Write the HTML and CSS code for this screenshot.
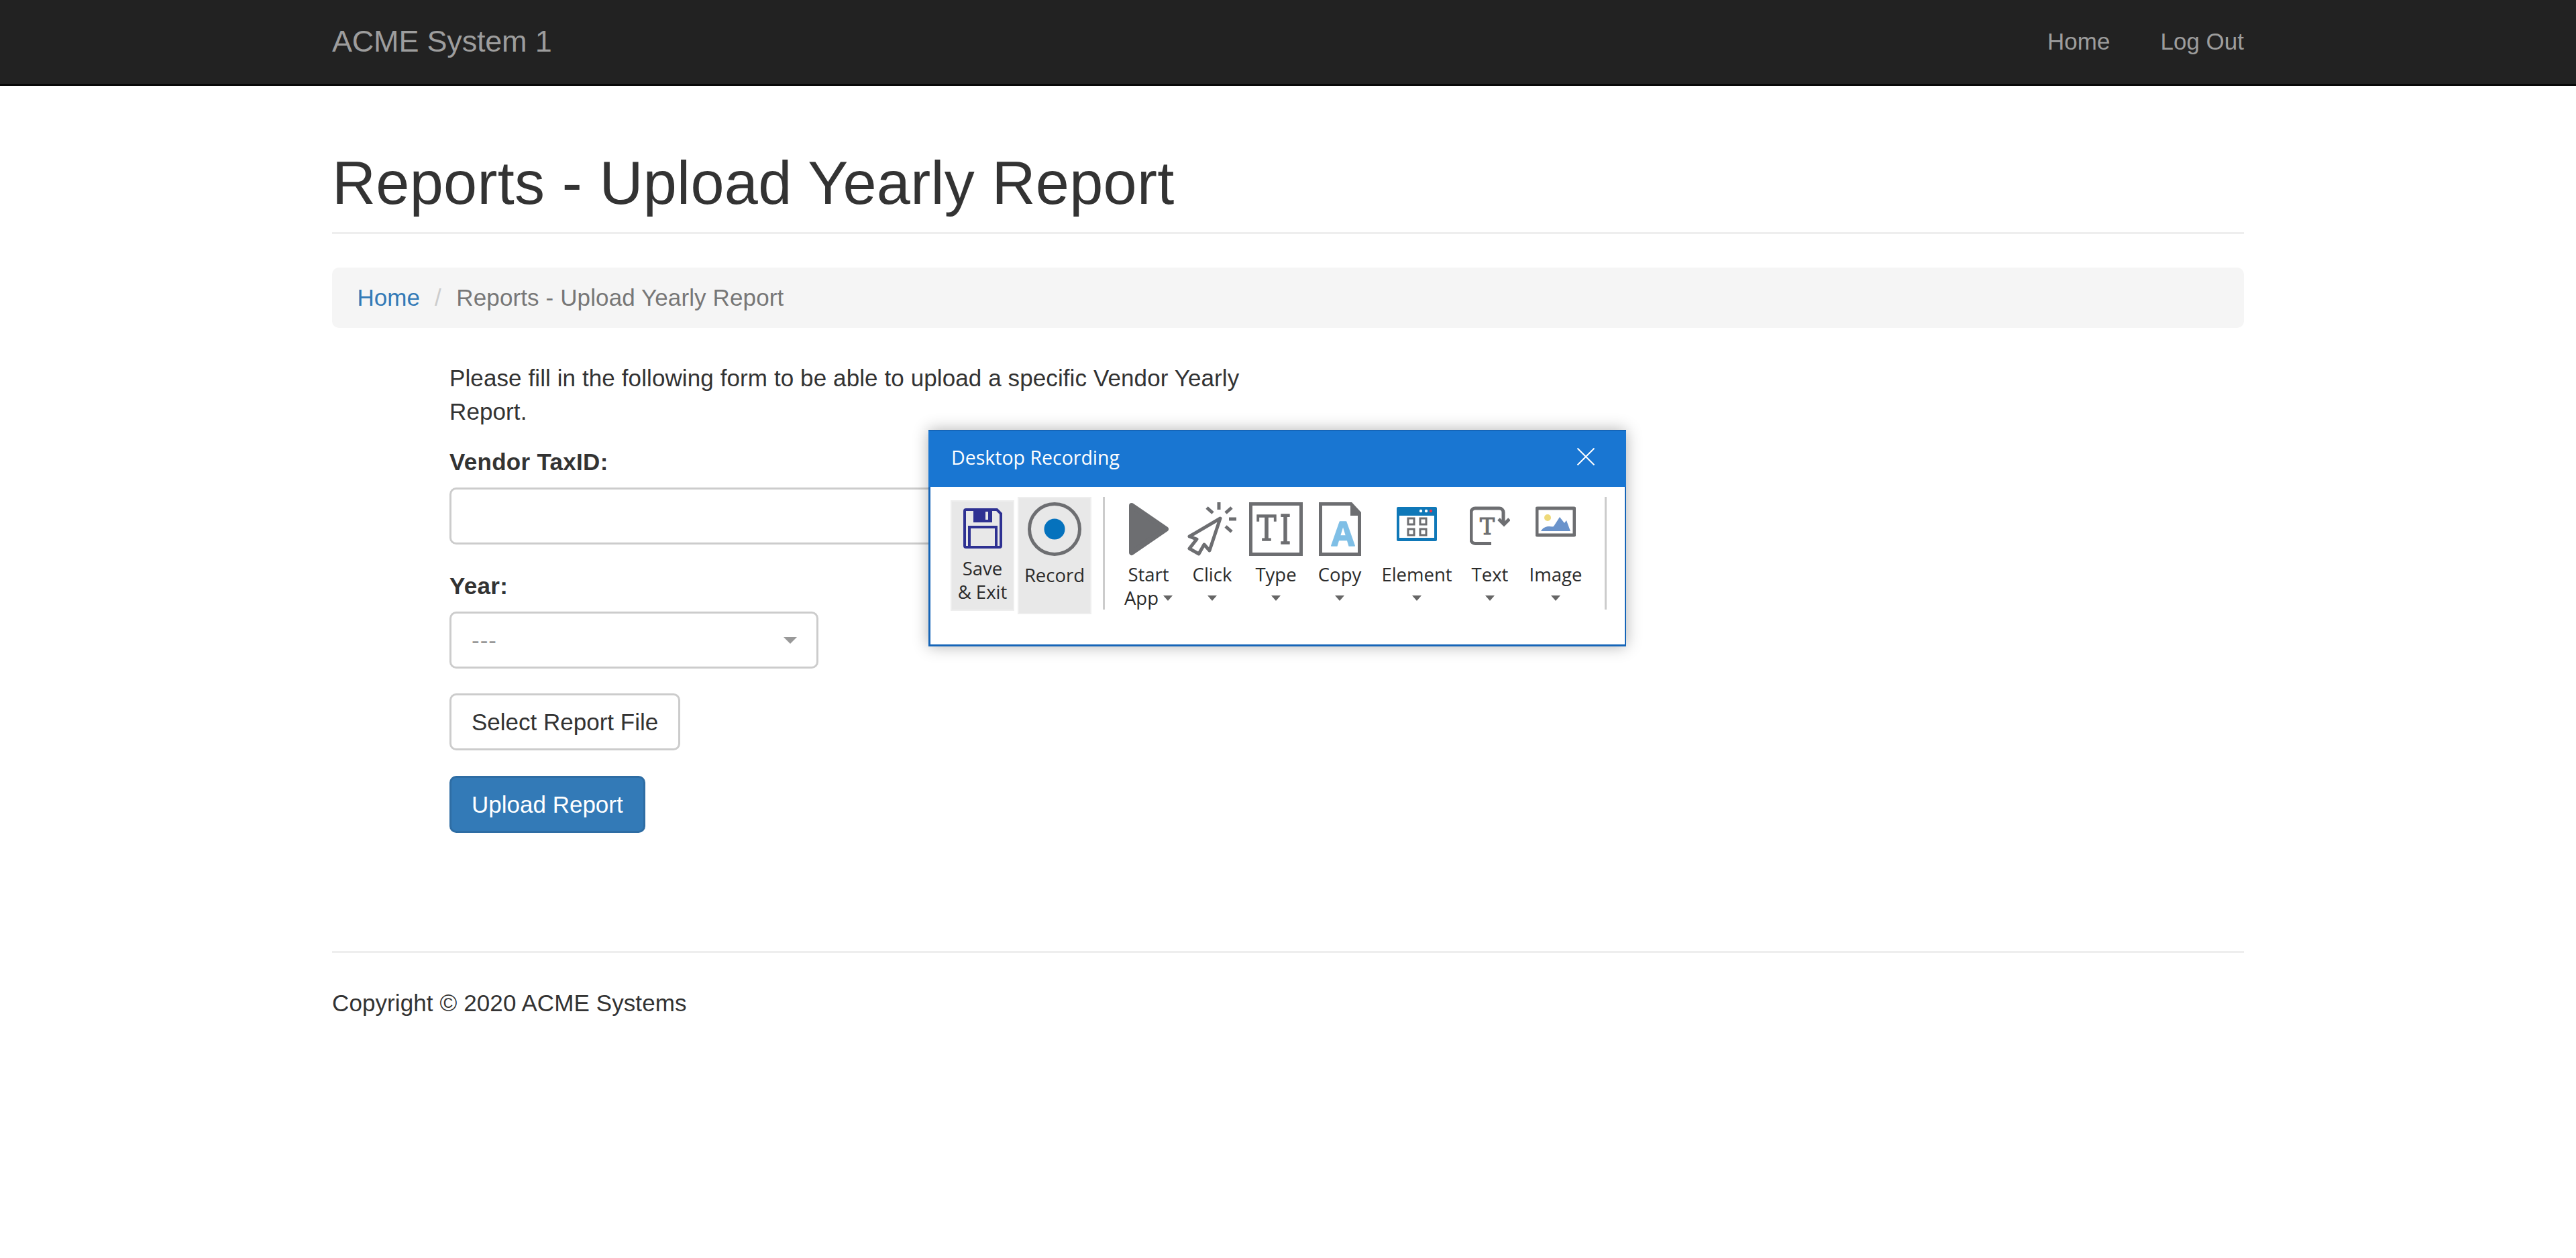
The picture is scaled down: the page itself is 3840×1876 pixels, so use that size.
FILE: index.html
```html
<!DOCTYPE html>
<html lang="en">
<head>
<meta charset="UTF-8">
<meta name="viewport" content="width=device-width, initial-scale=1.0">
<title>Reports - Upload Yearly Report</title>
<link rel="stylesheet" href="styles.css">
</head>
<body>

<nav class="navbar">
    <div class="container navbar-inner">
        <a class="brand" href="#">ACME System 1</a>
        <ul class="nav-links">
            <li><a href="#">Home</a></li>
            <li><a href="#">Log Out</a></li>
        </ul>
    </div>
</nav>

<main class="container">
    <div class="page-header">
        <h1>Reports - Upload Yearly Report</h1>
    </div>

    <ol class="breadcrumb">
        <li><a href="#">Home</a></li>
        <li class="active">Reports - Upload Yearly Report</li>
    </ol>

    <form class="report-form">
        <p>Please fill in the following form to be able to upload a specific Vendor Yearly Report.</p>

        <div class="form-group">
            <label for="taxid">Vendor TaxID:</label>
            <input id="taxid" class="form-control" type="text">
        </div>

        <div class="form-group">
            <label for="year">Year:</label>
            <div class="select-wrap">
                <select id="year" class="form-control year-select">
                    <option>---</option>
                </select>
            </div>
        </div>

        <div class="form-group">
            <button type="button" class="btn btn-default">Select Report File</button>
        </div>

        <div class="form-group">
            <button type="button" class="btn btn-primary">Upload Report</button>
        </div>
    </form>

    <footer class="site-footer">
        <p>Copyright &copy; 2020 ACME Systems</p>
    </footer>
</main>

<!-- recorder window floats over the page -->
<div class="recorder">
    <div class="recorder-title">
        <span>Desktop Recording</span>
        <svg class="recorder-close" viewBox="0 0 26 26"><path d="M0.5 0.5L25.5 25.5M25.5 0.5L0.5 25.5"/></svg>
    </div>
    <div class="toolbar">
        <div class="tool-save">
            <svg class="icon" width="58" height="60" viewBox="0 0 58 60">
                <path class="floppy" d="M4 2H50L56 8V56a2 2 0 0 1-2 2H4a2 2 0 0 1-2-2V4a2 2 0 0 1 2-2Z"/>
                <path class="floppy-fill" d="M15 2H43V21H15Z"/>
                <rect class="floppy-slot" x="33" y="5" width="4" height="12"/>
                <path class="floppy" d="M9 58V28H49V58"/>
            </svg>
            <span class="tool-label">Save</span>
            <span class="tool-label">&amp; Exit</span>
        </div>

        <div class="tool-record">
            <svg class="icon" width="80" height="80" viewBox="0 0 80 80">
                <circle class="stroke-grey" cx="40" cy="40" r="37.5"/>
                <circle class="record-dot" cx="40" cy="40" r="15.5"/>
            </svg>
            <span class="tool-label">Record</span>
        </div>

        <div class="tool-sep"></div>

        <div class="tool tool-start">
            <svg class="icon" width="59" height="80" viewBox="0 0 59 80">
                <path class="play" d="M4 5L55 40L4 75Z"/>
            </svg>
            <span class="tool-label">Start</span>
            <span class="tool-label tool-label-row">App<i class="caret"></i></span>
        </div>

        <div class="tool tool-click">
            <svg class="icon" width="74" height="80" viewBox="0 0 74 80">
                <path class="stroke-grey cursor" d="M49 24L3 51L14 55L3 69L17 77L25 63L33 72Z"/>
                <path class="stroke-grey" d="M47 0V11M57 16L66 8M62 25H73M57 36L66 44M38 16L29 8"/>
            </svg>
            <span class="tool-label">Click</span>
            <span class="tool-label tool-label-row"><i class="caret"></i></span>
        </div>

        <div class="tool tool-type">
            <svg class="icon" width="80" height="80" viewBox="0 0 80 80">
                <rect class="stroke-grey" x="2.5" y="2.5" width="75" height="75"/>
                <text class="icon-glyph" x="26" y="57" text-anchor="middle" textLength="29" lengthAdjust="spacingAndGlyphs">T</text>
                <text class="icon-glyph icon-glyph-tall" x="54" y="62" text-anchor="middle" textLength="17" lengthAdjust="spacingAndGlyphs">I</text>
            </svg>
            <span class="tool-label">Type</span>
            <span class="tool-label tool-label-row"><i class="caret"></i></span>
        </div>

        <div class="tool tool-copy">
            <svg class="icon" width="63" height="80" viewBox="0 0 63 80">
                <path class="stroke-grey" d="M2.5 2.5H48L60.5 16V77.5H2.5Z"/>
                <path class="fill-grey" d="M47 0L63 16V20H47Z"/>
                <text class="icon-letter" x="36" y="65" text-anchor="middle">A</text>
            </svg>
            <span class="tool-label">Copy</span>
            <span class="tool-label tool-label-row"><i class="caret"></i></span>
        </div>

        <div class="tool tool-element">
            <svg class="icon" width="60" height="80" viewBox="0 0 60 80">
                <rect class="window" x="0" y="7" width="60" height="51" rx="2"/>
                <rect class="window-body" x="4" y="20" width="52" height="33"/>
                <circle class="window-dot" cx="36" cy="13" r="2.2"/>
                <circle class="window-dot" cx="44" cy="13" r="2.2"/>
                <circle class="window-dot-red" cx="51" cy="13" r="2.2"/>
                <rect class="grid-cell" x="17" y="24" width="9" height="9"/>
                <rect class="grid-cell" x="35" y="24" width="9" height="9"/>
                <rect class="grid-cell" x="17" y="40" width="9" height="9"/>
                <rect class="grid-cell" x="35" y="40" width="9" height="9"/>
            </svg>
            <span class="tool-label">Element</span>
            <span class="tool-label tool-label-row"><i class="caret"></i></span>
        </div>

        <div class="tool tool-text">
            <svg class="icon" width="60" height="80" viewBox="0 0 60 80">
                <path class="stroke-grey" d="M32 61.5H8a6 6 0 0 1-6-6V15a6 6 0 0 1 6-6H44a6 6 0 0 1 6 6V32"/>
                <path class="stroke-grey" d="M43 25L51 33L59 25"/>
                <text class="icon-glyph-small" x="26" y="48" text-anchor="middle">T</text>
            </svg>
            <span class="tool-label">Text</span>
            <span class="tool-label tool-label-row"><i class="caret"></i></span>
        </div>

        <div class="tool tool-image">
            <svg class="icon" width="60" height="80" viewBox="0 0 60 80">
                <rect class="stroke-grey" x="2" y="9" width="56" height="40" rx="1"/>
                <circle class="sun" cx="18" cy="23" r="5"/>
                <path class="mountain" d="M8 43C11 38 15 36 20 36C23 36 25 37 27 36L36 22L43 31L46 27L52 43Z"/>
            </svg>
            <span class="tool-label">Image</span>
            <span class="tool-label tool-label-row"><i class="caret"></i></span>
        </div>

        <div class="tool-sep tool-sep-end"></div>
    </div>
</div>

</body>
</html>
```

FILE: styles.css
```css
* {
    box-sizing: border-box;
}

body {
    position: relative;
    margin: 0;
    background-color: #fff;
    color: #333;
    font-family: "Liberation Sans", Arial, sans-serif;
    font-size: 35px;
    line-height: 50px;
}

a {
    text-decoration: none;
}

.container {
    width: 2850px;
    margin: 0 auto;
}

/* top bar */
.navbar {
    height: 128px;
    background-color: #222;
    border-bottom: 3px solid #080808;
}

.navbar-inner {
    display: flex;
    justify-content: space-between;
}

.brand {
    padding: 37px 0;
    color: #9d9d9d;
    font-size: 45px;
    line-height: 50px;
    letter-spacing: -0.2px;
}

.nav-links {
    display: flex;
    gap: 75px;
    margin: 0;
    padding: 37px 0;
    list-style: none;
}

.nav-links a {
    color: #9d9d9d;
}

/* page heading */
.page-header {
    margin: 96px 0 50px;
    padding-bottom: 23px;
    border-bottom: 3px solid #eee;
}

.page-header h1 {
    margin: 0;
    font-size: 90px;
    font-weight: 500;
    line-height: 99px;
    letter-spacing: 0.33px;
}

.breadcrumb {
    margin: 0 0 50px;
    padding: 20px 37.5px;
    background-color: #f5f5f5;
    border-radius: 10px;
    list-style: none;
}

.breadcrumb li {
    display: inline-block;
}

.breadcrumb li + li:before {
    content: "/\00a0";
    padding: 0 12.5px;
    color: #ccc;
}

.breadcrumb a {
    color: #337ab7;
}

.breadcrumb .active {
    color: #777;
    letter-spacing: 0.12px;
}

/* form */
.report-form {
    width: 1250px;
    margin-left: 175px;
}

.report-form p {
    margin: 0 0 25px;
    letter-spacing: 0.1px;
}

.form-group {
    margin-bottom: 37.5px;
}

.form-group label {
    display: block;
    margin-bottom: 12.5px;
    font-weight: bold;
    letter-spacing: 0.3px;
}

.form-control {
    display: block;
    width: 100%;
    height: 85px;
    padding: 15px 30px;
    background-color: #fff;
    border: 3px solid #ccc;
    border-radius: 10px;
    color: #555;
    font-family: inherit;
    font-size: 35px;
}

.select-wrap {
    position: relative;
    width: 550px;
}

.select-wrap:after {
    content: "";
    position: absolute;
    top: 38px;
    right: 32px;
    border-left: 10px solid transparent;
    border-right: 10px solid transparent;
    border-top: 10px solid #999;
}

.year-select {
    appearance: none;
    color: #999;
    letter-spacing: 1px;
}

.btn {
    display: inline-block;
    height: 85px;
    padding: 15px 30px;
    border: 3px solid transparent;
    border-radius: 10px;
    font-family: inherit;
    font-size: 35px;
    line-height: 50px;
}

.btn-default {
    background-color: #fff;
    border-color: #ccc;
    color: #333;
}

.btn-primary {
    background-color: #337ab7;
    border-color: #2e6da4;
    color: #fff;
}

.site-footer {
    margin-top: 176px;
    padding-top: 50px;
    border-top: 3px solid #eee;
}

.site-footer p {
    margin: 0;
    letter-spacing: 0.1px;
}

/* recorder window */
.recorder {
    position: absolute;
    top: 641px;
    left: 1384px;
    width: 1040px;
    height: 323px;
    background-color: #fff;
    border: 3px solid #1565b8;
    border-top-width: 2px;
    border-right-width: 2px;
    box-shadow: 0 0 22px rgba(0, 0, 0, 0.3);
    color: #2b2b2b;
    font-family: "Open Sans", sans-serif;
}

.recorder-title {
    display: flex;
    align-items: center;
    justify-content: space-between;
    height: 83px;
    margin-left: -3px;
    margin-right: -2px;
    padding: 0 47px 6px 34px;
    background-color: #1976d2;
    color: #fff;
    font-size: 28.5px;
    line-height: 40px;
}

.recorder-close {
    width: 26px;
    height: 26px;
    margin-bottom: 2px;
    fill: none;
    stroke: #fff;
    stroke-width: 2;
}

.toolbar {
    display: flex;
    align-items: flex-start;
    padding: 15px 0 0 30px;
}

.icon {
    display: block;
    margin: 0 auto;
}

.tool-label {
    display: block;
    height: 35px;
    font-size: 27.5px;
    line-height: 35px;
    text-align: center;
    white-space: nowrap;
}

.tool-label-row {
    display: flex;
    align-items: center;
    justify-content: center;
    gap: 7px;
}

.caret {
    display: block;
    border-left: 7.5px solid transparent;
    border-right: 7.5px solid transparent;
    border-top: 8px solid #666;
}

.tool-save {
    flex: none;
    width: 95px;
    height: 165px;
    margin-top: 5px;
    margin-right: 5px;
    padding-top: 10px;
    background-color: #e8e8e8;
    border: 2px solid #eee;
}

.tool-save .icon {
    margin-bottom: 12px;
}

.tool-record {
    flex: none;
    width: 110px;
    height: 175px;
    padding-top: 6px;
    background-color: #e8e8e8;
    border: 2px solid #eee;
}

.tool-record .icon {
    margin-bottom: 11px;
}

.tool-sep {
    flex: none;
    width: 3px;
    height: 168px;
    margin: 0 18px 0 17px;
    background-color: #ccc;
}

.tool-sep-end {
    margin: 0 0 0 17px;
}

.tool {
    flex: none;
    padding-top: 8px;
}

.tool .icon {
    margin-bottom: 10px;
}

.tool-start { width: 94px; }
.tool-click { width: 96px; }
.tool-type { width: 94px; }
.tool-copy { width: 96px; }
.tool-element { width: 134px; }
.tool-text { width: 84px; }
.tool-image { width: 112px; }

/* icon parts */
.stroke-grey {
    fill: none;
    stroke: #6d6e71;
    stroke-width: 5;
}

.cursor {
    stroke-linejoin: round;
}

.fill-grey {
    fill: #6d6e71;
}

.play {
    fill: #6d6e71;
    stroke: #6d6e71;
    stroke-width: 8;
    stroke-linejoin: round;
}

.floppy {
    fill: none;
    stroke: #2e3192;
    stroke-width: 4;
}

.floppy-fill {
    fill: #2e3192;
}

.floppy-slot {
    fill: #e8e8e8;
}

.record-dot {
    fill: #0572bd;
}

.icon-glyph {
    fill: #6d6e71;
    stroke: #6d6e71;
    stroke-width: 1.5;
    font-family: "DejaVu Serif", serif;
    font-size: 53px;
}

.icon-glyph-tall {
    font-size: 60px;
}

.icon-glyph-small {
    fill: #6d6e71;
    stroke: #6d6e71;
    stroke-width: 1.2;
    font-family: "DejaVu Serif", serif;
    font-size: 33px;
}

.icon-letter {
    fill: #7fbfe6;
    stroke: #7fbfe6;
    stroke-width: 1.5;
    stroke-linejoin: round;
    font-family: "Open Sans", sans-serif;
    font-size: 50px;
    font-weight: 700;
}

.window {
    fill: #0f78b8;
}

.window-body {
    fill: #fff;
}

.window-dot {
    fill: #fff;
}

.window-dot-red {
    fill: #e8384f;
}

.grid-cell {
    fill: none;
    stroke: #6d6e71;
    stroke-width: 3;
}

.sun {
    fill: #eed979;
}

.mountain {
    fill: #6a93cb;
}
```
